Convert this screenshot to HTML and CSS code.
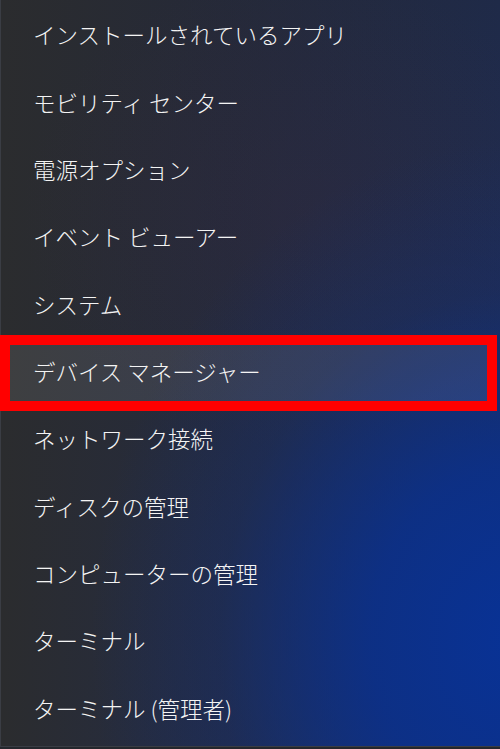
FILE: index.html
```html
<!DOCTYPE html>
<html lang="ja">
<head>
<meta charset="utf-8">
<title>クイック リンク メニュー</title>
<link rel="stylesheet" href="styles.css">
</head>
<body>
<nav class="menu">
  <div class="item">インストールされているアプリ</div>
  <div class="item">モビリティ センター</div>
  <div class="item">電源オプション</div>
  <div class="item">イベント ビューアー</div>
  <div class="item">システム</div>
  <div class="item item-active">デバイス マネージャー</div>
  <div class="item">ネットワーク接続</div>
  <div class="item">ディスクの管理</div>
  <div class="item">コンピューターの管理</div>
  <div class="item">ターミナル</div>
  <div class="item">ターミナル (管理者)</div>
</nav>
</body>
</html>
```

FILE: styles.css
```css
html, body {
  margin: 0;
  padding: 0;
  width: 500px;
  height: 749px;
  overflow: hidden;
}

body {
  background: #24272d;
  font-family: "Noto Sans CJK JP", "Noto Sans", sans-serif;
}

.menu {
  box-sizing: border-box;
  width: 500px;
  height: 747px;
  padding-top: 0.5px;
  border-left: 1px solid #3a3d44;
  border-bottom: 1px solid #3a3d44;
  display: flex;
  flex-direction: column;
  background:
    radial-gradient(ellipse 430px 500px at 520px 640px, rgba(8, 50, 150, 1) 0%, rgba(10, 48, 140, 0.85) 35%, rgba(20, 45, 110, 0.35) 70%, rgba(20, 45, 110, 0) 100%),
    radial-gradient(ellipse 280px 240px at 300px 210px, rgba(55, 40, 62, 0.28) 0%, rgba(55, 40, 62, 0) 100%),
    linear-gradient(90deg, rgba(43, 44, 46, 1) 0%, rgba(40, 41, 48, 0.65) 45%, rgba(30, 42, 75, 0) 100%),
    linear-gradient(180deg, #1f2a48 0%, #1f2d54 50%, #1a3272 100%);
}

.item {
  height: 67.35px;
  flex: none;
  display: flex;
  align-items: center;
  padding-left: 32px;
  font-size: 22.5px;
  font-weight: 300;
  color: #f4f4f4;
  white-space: nowrap;
  position: relative;
}

.item-active {
  margin: 0 4px;
  padding-left: 28px;
  border-radius: 4px;
  background: rgba(255, 255, 255, 0.09);
}

.item-active::after {
  content: "";
  position: absolute;
  top: -2.5px;
  bottom: -6px;
  left: -5px;
  right: -1px;
  border: 10px solid #ff0000;
  pointer-events: none;
}
```
